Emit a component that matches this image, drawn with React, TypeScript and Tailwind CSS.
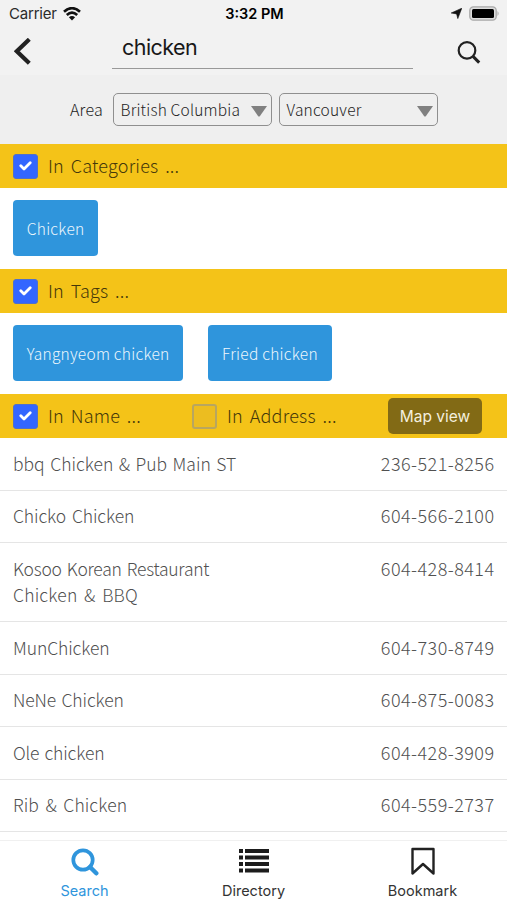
import type { ReactNode } from "react";

const rows = [
  { name: ["bbq Chicken & Pub Main ST"], phone: "236-521-8256", spacing: "tracking-[0px] [word-spacing:1.6px]" },
  { name: ["Chicko Chicken"], phone: "604-566-2100", spacing: "tracking-[-0.1px] [word-spacing:2px]" },
  {
    name: ["Kosoo Korean Restaurant", "Chicken & BBQ"],
    phone: "604-428-8414",
    spacing: "tracking-[-0.25px] [word-spacing:1.5px] [&>p:last-child]:tracking-[0.2px] [&>p:last-child]:[word-spacing:2.5px]",
  },
  { name: ["MunChicken"], phone: "604-730-8749", spacing: "tracking-[-0.1px]" },
  { name: ["NeNe Chicken"], phone: "604-875-0083", spacing: "tracking-[-0.1px] [word-spacing:1.5px]" },
  { name: ["Ole chicken"], phone: "604-428-3909", spacing: "tracking-[-0.15px] [word-spacing:1.5px]" },
  { name: ["Rib & Chicken"], phone: "604-559-2737", spacing: "tracking-[0.1px] [word-spacing:2.5px]" },
];

function Checkbox({ checked = false }: { checked?: boolean }) {
  if (!checked) {
    return <span className="size-[25px] shrink-0 rounded-[3px] border-2 border-[#b8a660] bg-[#ecbd20]" />;
  }
  return (
    <span className="flex size-[25px] shrink-0 items-center justify-center rounded-[3px] border border-[#5070c8] bg-[#3366ff]">
      <svg width="13" height="10" viewBox="0 0 13 10" fill="none">
        <path d="M1.8 4.8 5 7.9 11.2 1.8" stroke="#fff" strokeWidth="2.8" strokeLinecap="round" strokeLinejoin="round" />
      </svg>
    </span>
  );
}

function Label({ children }: { children: ReactNode }) {
  return (
    <span className="pb-0.5 text-[18px] leading-6 tracking-[0.2px] [word-spacing:2.6px] whitespace-pre text-[#44370a]">
      {children}
    </span>
  );
}

function Chip({ children }: { children: ReactNode }) {
  return (
    <button className="h-14 rounded-[4px] bg-[#2f95dc] px-[13.8px] pt-0.5 text-[15.5px] tracking-[0.25px] whitespace-nowrap text-[#eef7fd]">
      {children}
    </button>
  );
}

function Select({ value }: { value: string }) {
  return (
    <div className="flex h-[33px] w-[159px] items-center justify-between rounded-[5px] border-[1.5px] border-[#8f8f8f] pr-1 pl-[6.5px] text-[15.5px] tracking-[0.2px] text-[#222]">
      <span className="whitespace-nowrap">{value}</span>
      <svg className="mt-1 shrink-0" width="16" height="11" viewBox="0 0 16 11">
        <path d="M0 0H16L8.8 10.2Q8 11 7.2 10.2Z" fill="#808080" />
      </svg>
    </div>
  );
}

export default function App() {
  return (
    <div className="flex h-[900px] w-[507px] flex-col overflow-hidden bg-white font-['Noto_Sans_CJK_KR',sans-serif] font-light">
      <header className="h-[75px] bg-[#f2f2f2] font-[Inter,sans-serif] font-normal">
        <div className="grid h-[27px] grid-cols-3 items-center pr-[7px] pl-[9px] text-[15px]">
          <div className="flex items-center gap-1.5 text-[#2b2b2b]">
            <span className="pt-px tracking-[-0.2px]">Carrier</span>
            <svg width="18" height="14" viewBox="0 0 18 14" fill="none" stroke="#111" strokeWidth="2.7">
              <path d="M1 4.8Q9-2.4 17 4.8" />
              <path d="M3.8 8Q9 3.4 14.2 8" />
              <path d="M9 13.5 5.9 10.3Q9 7.6 12.1 10.3Z" fill="#111" stroke="none" />
            </svg>
          </div>
          <span className="text-center text-[14.5px] font-semibold text-black">3:32 PM</span>
          <div className="flex items-center justify-end gap-[7px]">
            <svg width="11" height="11" viewBox="0 0 11 11">
              <path d="M10.8.2 6.8 10.6 5.6 5.9.2 5Z" fill="#111" stroke="#111" strokeWidth=".6" />
            </svg>
            <svg width="31" height="15" viewBox="0 0 31 15">
              <rect x=".8" y=".8" width="26.4" height="13.4" rx="3.6" fill="#ddd" stroke="#a9a9a9" strokeWidth="1.3" />
              <rect x="3" y="3" width="22" height="9" rx="1.5" fill="#000" />
              <path d="M28.5 5Q30.8 7.5 28.5 10Z" fill="#aaa" />
            </svg>
          </div>
        </div>
        <div className="flex">
          <svg className="mt-[11px] ml-[14px]" width="18" height="27" viewBox="0 0 18 27" fill="none">
            <path d="M15.3 1.3 2.8 13.3 15.3 25.3" stroke="#222" strokeWidth="4.2" />
          </svg>
          <div className="ml-20 h-[42px] w-[301px] border-b-[1.5px] border-[#999] pt-[5px] pl-2.5 text-[21.5px] leading-[30px] tracking-[-0.55px] text-[#181818]">
            chicken
          </div>
          <svg className="mt-3.5 ml-[44px]" width="24" height="24" viewBox="0 0 24 24" fill="none" stroke="#222">
            <circle cx="10" cy="9.4" r="8.3" strokeWidth="2.2" />
            <path d="m16 15.4 6.2 6.2" strokeWidth="3" />
          </svg>
        </div>
      </header>

      <div className="flex h-[69px] items-center bg-[#efefef] pl-[70px]">
        <span className="w-[43px] pb-0.5 text-[16px] tracking-[0.2px] text-[#222]">Area</span>
        <div className="flex gap-[7px]">
          <Select value="British Columbia" />
          <Select value="Vancouver" />
        </div>
      </div>

      <div className="flex h-11 shrink-0 items-center gap-2.5 bg-[#f4c318] pl-[13px]">
        <Checkbox checked />
        <Label>In Categories ...</Label>
      </div>
      <div className="flex h-[81px] shrink-0 items-center pb-px pl-[13px]">
        <Chip>Chicken</Chip>
      </div>
      <div className="flex h-11 shrink-0 items-center gap-2.5 bg-[#f4c318] pl-[13px]">
        <Checkbox checked />
        <Label>In Tags ...</Label>
      </div>
      <div className="flex h-[81px] shrink-0 items-center gap-[25px] pb-px pl-[13px]">
        <Chip>Yangnyeom chicken</Chip>
        <Chip>Fried chicken</Chip>
      </div>
      <div className="flex h-11 shrink-0 items-center bg-[#f4c318] pl-[13px]">
        <div className="flex w-[179px] items-center gap-2.5">
          <Checkbox checked />
          <Label>In Name ...</Label>
        </div>
        <div className="flex w-[196px] items-center gap-2.5">
          <Checkbox />
          <Label>In Address ...</Label>
        </div>
        <button className="h-9 w-[94px] rounded-[5px] bg-[#826a15] pt-px font-[Inter,sans-serif] text-[15.5px] font-normal whitespace-nowrap text-[#f4efdf]">
          Map view
        </button>
      </div>

      <ul className="h-[402px] shrink-0 overflow-hidden text-[17.5px] leading-[26.3px] text-[#505050]">
        {rows.map((row) => (
          <li key={row.phone} className="flex justify-between border-b-[1.5px] border-[#e5e5e5] pt-[12.7px] pr-[12.5px] pb-[12.6px] pl-[13px]">
            <div className={row.spacing}>
              {row.name.map((line) => (
                <p key={line}>{line}</p>
              ))}
            </div>
            <span className="-mt-px text-[18px] tracking-[0.45px]">{row.phone}</span>
          </li>
        ))}
      </ul>

      <nav className="grid h-[60px] shrink-0 grid-cols-3 border-t border-[#f0f0f0] font-[Inter,sans-serif] text-[14.5px] font-normal text-[#333]">
        <div className="flex flex-col items-center pt-[7px] text-[#2f95dc]">
          <svg width="28" height="28" viewBox="0 0 28 28" fill="none" stroke="currentColor">
            <circle cx="12" cy="12" r="9.7" strokeWidth="3.7" />
            <path d="m19 19 6.3 6.3" strokeWidth="4.4" strokeLinecap="round" />
          </svg>
          <span className="mt-[4px]">Search</span>
        </div>
        <div className="flex flex-col items-center pt-2">
          <svg width="30" height="24" viewBox="0 0 30 24" fill="#1c1c1c">
            <path d="M0 0h4v4H0zM0 6.5h4v4H0zM0 13h4v4H0zM0 19.5h4v4H0zM6 0h24v4H6zM6 6.5h24v4H6zM6 13h24v4H6zM6 19.5h24v4H6z" />
          </svg>
          <span className="mt-[7px]">Directory</span>
        </div>
        <div className="flex flex-col items-center pt-[6px]">
          <svg width="24" height="28" viewBox="0 0 24 28" fill="none">
            <path d="M1.5 2H22.5V26.5L12 17 1.5 26.5Z" stroke="#222" strokeWidth="2.4" strokeLinejoin="round" />
          </svg>
          <span className="mt-[5px]">Bookmark</span>
        </div>
      </nav>
    </div>
  );
}
